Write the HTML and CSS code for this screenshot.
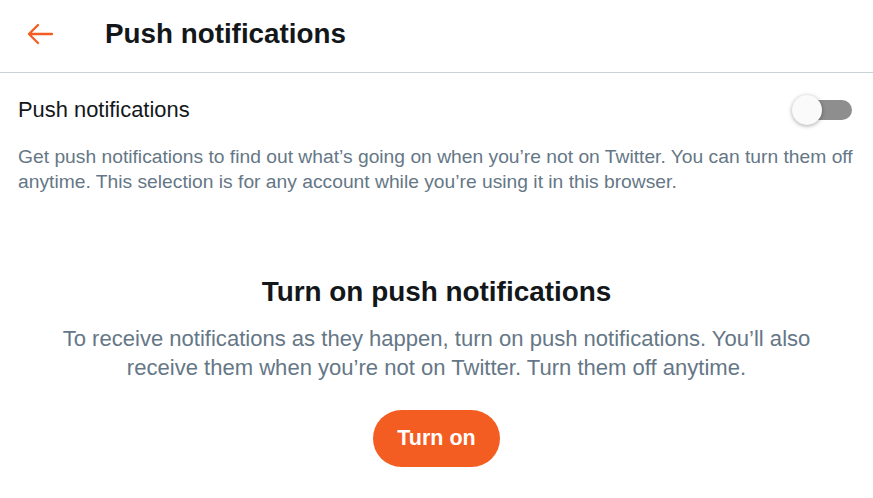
FILE: index.html
```html
<!DOCTYPE html>
<html>
<head>
<meta charset="utf-8">
<link rel="stylesheet" href="styles.css">
</head>
<body>
<div class="page">
  <header class="header">
    <button class="back" aria-label="Back">
      <svg viewBox="0 0 26 22" width="26" height="22"><path d="M25 11H2M11 2L2 11l9 9" fill="none" stroke="currentColor" stroke-width="2.3" stroke-linecap="round" stroke-linejoin="round"/></svg>
    </button>
    <h1 class="title">Push notifications</h1>
  </header>
  <section class="setting">
    <div class="setting-row">
      <span class="setting-label">Push notifications</span>
      <span class="toggle"><span class="track"></span><span class="knob"></span></span>
    </div>
    <p class="setting-desc">Get push notifications to find out what’s going on when you’re not on Twitter. You can turn them off anytime. This selection is for any account while you’re using it in this browser.</p>
  </section>
  <section class="prompt">
    <h2 class="prompt-title">Turn on push notifications</h2>
    <p class="prompt-text">To receive notifications as they happen, turn on push notifications. You’ll also receive them when you’re not on Twitter. Turn them off anytime.</p>
    <button class="cta">Turn on</button>
  </section>
</div>
</body>
</html>
```
FILE: styles.css
```css
* { box-sizing: border-box; }
html, body { margin: 0; padding: 0; background: #fff; }
body { font-family: "Liberation Sans", Arial, sans-serif; color: #14171a; }
.page { width: 873px; height: 498px; overflow: hidden; }
.header {
  height: 73px;
  display: flex;
  align-items: center;
  border-bottom: 1px solid #c9d4da;
  padding-left: 27px;
  padding-bottom: 4px;
}
.back {
  border: 0; background: none; padding: 0; color: #f45d22;
  width: 26px; height: 22px; display: flex; align-items: center; justify-content: center;
}
.title {
  margin: 0 0 0 52px;
  font-size: 27.8px;
  font-weight: 700;
  color: #14171a;
}
.setting { padding: 22px 20px 0 18px; }
.setting-row { display: flex; align-items: center; justify-content: space-between; height: 29px; }
.setting-label { font-size: 21.9px; color: #14171a; }
.toggle { position: relative; width: 60px; height: 30px; margin-right: 1px; }
.track {
  position: absolute; left: 2px; right: 0; top: 5px; height: 20px;
  background: #8e8e8e; border-radius: 10px;
}
.knob {
  position: absolute; left: 0; top: 0; width: 30px; height: 30px; border-radius: 50%;
  background: #fafafa; box-shadow: 0 1px 4px rgba(0,0,0,0.35);
}
.setting-desc {
  margin: 20px 0 0;
  font-size: 19.25px;
  line-height: 25px;
  color: #657786;
}
.prompt { text-align: center; padding: 81px 30px 0; }
.prompt-title { margin: 0; font-size: 27.9px; font-weight: 700; line-height: 34px; color: #14171a; }
.prompt-text {
  margin: 15px auto 0;
  max-width: 790px;
  font-size: 22.05px;
  line-height: 29px;
  color: #657786;
}
.cta {
  margin-top: 28px;
  height: 57px;
  padding: 0 24px;
  border: 0;
  border-radius: 29px;
  background: #f45d22;
  color: #fff;
  font-family: "Liberation Sans", Arial, sans-serif;
  font-weight: 700;
  font-size: 21.5px;
}
```
